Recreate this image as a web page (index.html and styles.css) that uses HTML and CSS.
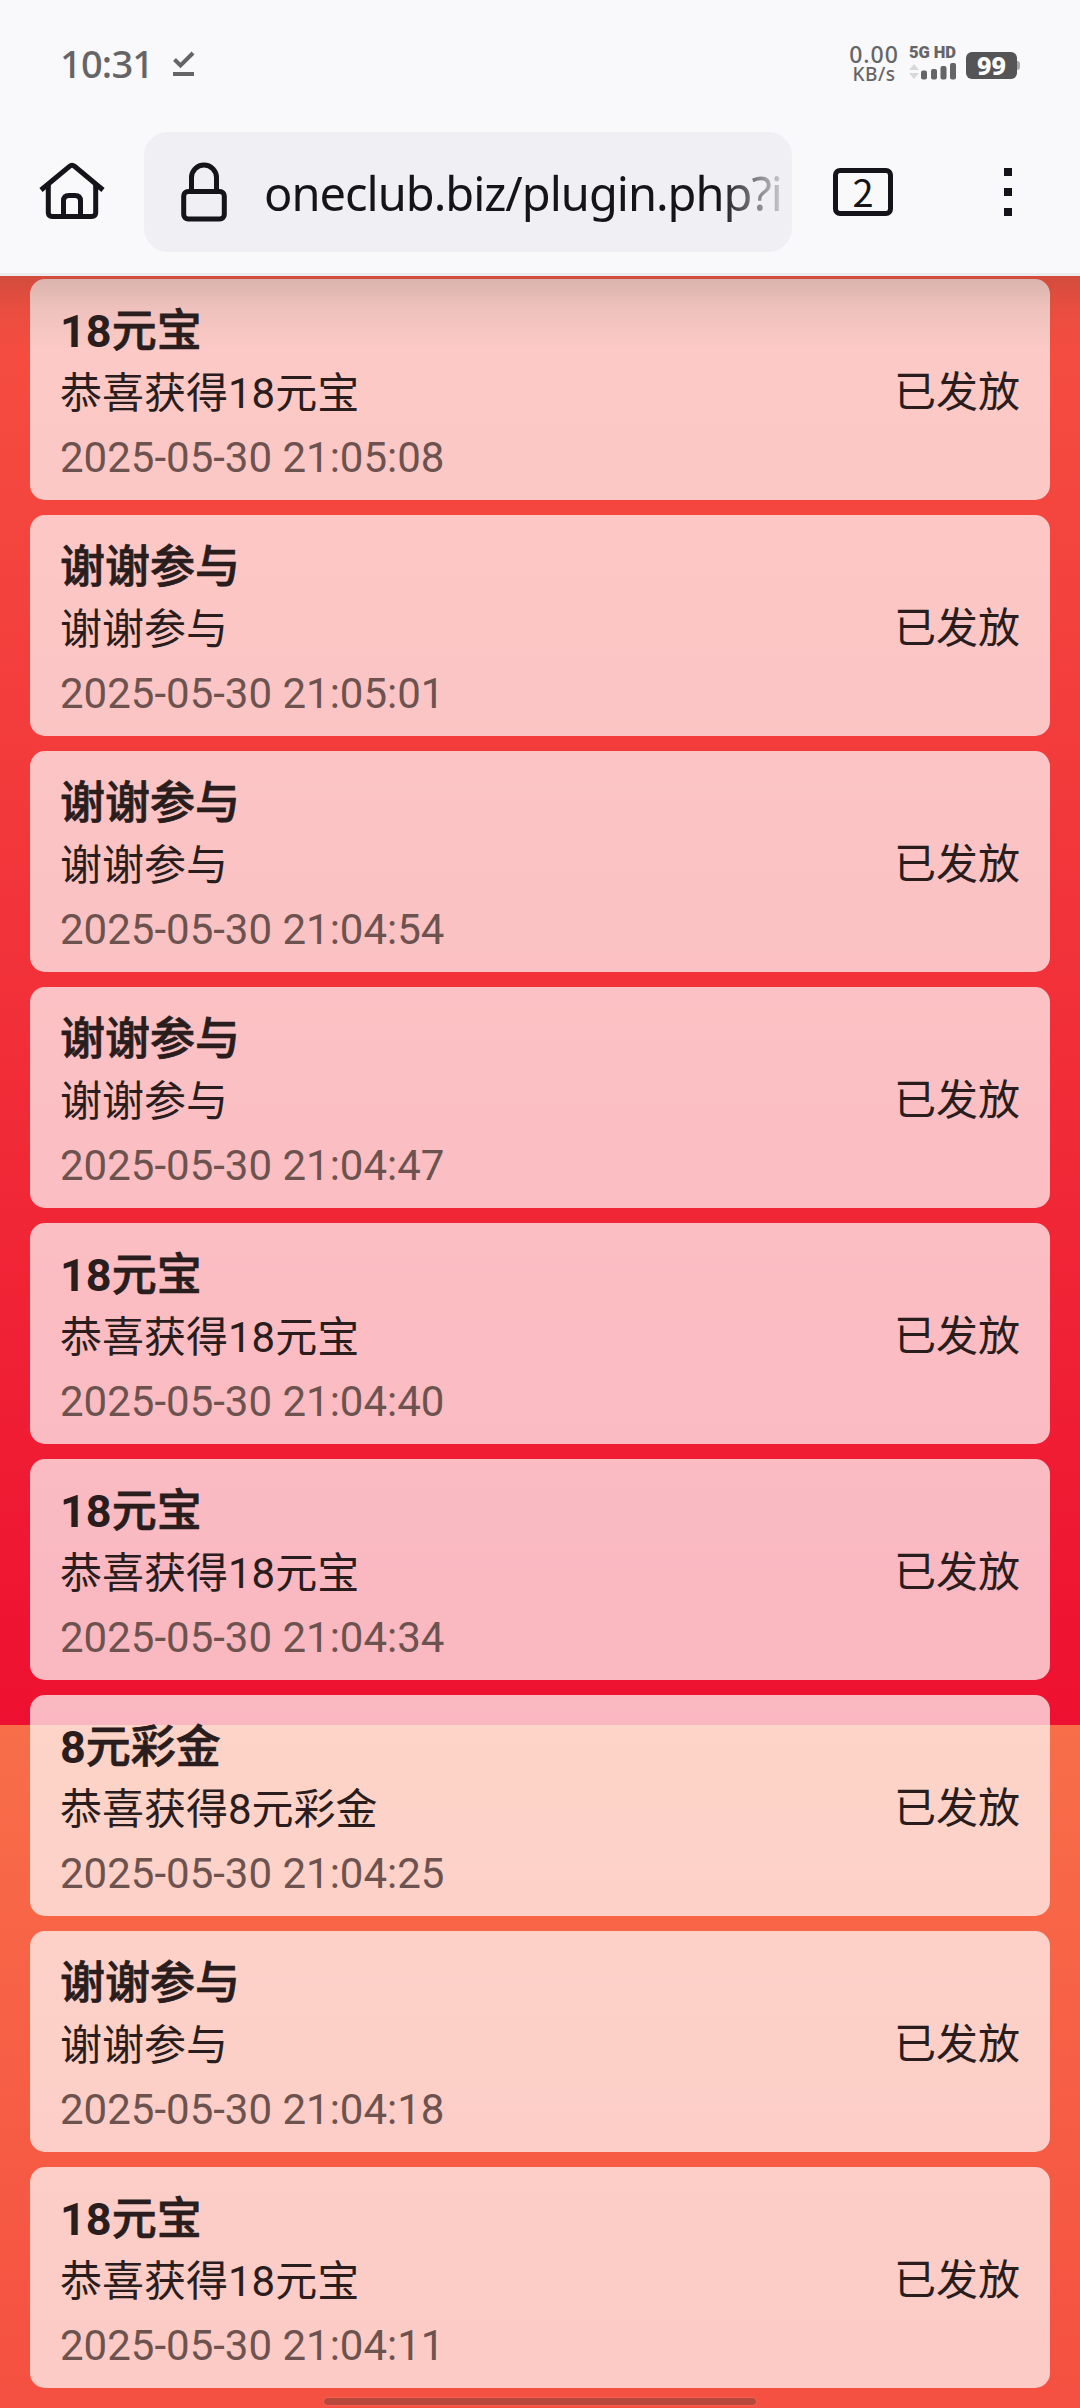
FILE: index.html
```html
<!DOCTYPE html>
<html lang="zh-CN">
<head>
<meta charset="utf-8">
<title>oneclub.biz</title>
<link rel="stylesheet" href="styles.css">
</head>
<body>
<header class="chrome">
  <div class="status">
    <span class="clock">10:31</span>
    <svg class="done" width="22" height="26" viewBox="0 0 22 26"><path d="M1.5 8.500 7.500 14.500 20 2" fill="none" stroke="#656567" stroke-width="4"/><path d="M0 23H21" stroke="#656567" stroke-width="4"/></svg>
    <div class="speed"><span class="rate">0.00</span><span class="unit">KB/s</span></div>
    <div class="signal">
      <span class="net"><span>5G</span><span>HD</span></span>
      <svg width="48" height="17" viewBox="0 0 48 17"><path d="M5 1 10 7H0ZM0 10H10L5 16Z" fill="#d8d8da"/><g fill="#656567"><rect x="12" y="7.500" width="6" height="9" rx="2"/><rect x="22" y="6" width="6" height="10.500" rx="2"/><rect x="31.500" y="3" width="6" height="13.500" rx="2"/><rect x="41" y="0" width="6" height="16.500" rx="2"/></g></svg>
    </div>
    <div class="battery"><span class="level">99</span><span class="tip"></span></div>
  </div>
  <div class="toolbar">
    <svg class="home" width="66" height="60" viewBox="0 0 66 60" fill="none" stroke="#15141a" stroke-width="5" stroke-linejoin="round"><path d="M2 28 30.500 4.300Q33 2.300 35.500 4.300L64 28"/><path d="M9.300 23V50.500Q9.300 54.500 13.300 54.500H52.700Q56.700 54.500 56.700 50.500V23"/><path d="M24.500 54V39Q24.500 33.500 30 33.500H36Q41.500 33.500 41.500 39V54"/></svg>
    <div class="address">
      <svg class="lock" width="46" height="60" viewBox="0 0 46 60" fill="none" stroke="#15141a" stroke-width="5"><rect x="2.700" y="29.500" width="40.600" height="27.500" rx="4.500"/><path d="M10.500 29V15.500A12.500 12.500 0 0 1 35.500 15.500V29"/></svg>
      <span class="url">oneclub.biz/plugin.php?i</span>
    </div>
    <span class="tabs">2</span>
    <span class="menu"><i></i><i></i><i></i></span>
  </div>
</header>
<main class="records">
  <article class="card"><div class="info"><h2><b>18</b>元宝</h2><p>恭喜获得18元宝</p><time>2025-05-30 21:05:08</time></div><span class="state">已发放</span></article>
  <article class="card"><div class="info"><h2>谢谢参与</h2><p>谢谢参与</p><time>2025-05-30 21:05:01</time></div><span class="state">已发放</span></article>
  <article class="card"><div class="info"><h2>谢谢参与</h2><p>谢谢参与</p><time>2025-05-30 21:04:54</time></div><span class="state">已发放</span></article>
  <article class="card"><div class="info"><h2>谢谢参与</h2><p>谢谢参与</p><time>2025-05-30 21:04:47</time></div><span class="state">已发放</span></article>
  <article class="card"><div class="info"><h2><b>18</b>元宝</h2><p>恭喜获得18元宝</p><time>2025-05-30 21:04:40</time></div><span class="state">已发放</span></article>
  <article class="card"><div class="info"><h2><b>18</b>元宝</h2><p>恭喜获得18元宝</p><time>2025-05-30 21:04:34</time></div><span class="state">已发放</span></article>
  <article class="card"><div class="info"><h2><b>8</b>元彩金</h2><p>恭喜获得8元彩金</p><time>2025-05-30 21:04:25</time></div><span class="state">已发放</span></article>
  <article class="card"><div class="info"><h2>谢谢参与</h2><p>谢谢参与</p><time>2025-05-30 21:04:18</time></div><span class="state">已发放</span></article>
  <article class="card"><div class="info"><h2><b>18</b>元宝</h2><p>恭喜获得18元宝</p><time>2025-05-30 21:04:11</time></div><span class="state">已发放</span></article>
</main>
<div class="gesture"></div>
</body>
</html>
```
FILE: styles.css
```css
* { box-sizing: border-box; }
body {
  margin: 0;
  width: 1080px;
  height: 2408px;
  overflow: hidden;
  position: relative;
  font-family: Roboto, "Noto Sans CJK SC", sans-serif;
  color: #291d1d;
}
.chrome {
  height: 276px;
  background: #f9f9fb;
  border-bottom: 3px solid #ececef;
}
.status {
  height: 132px;
  padding: 0 60px 0 60px;
  display: flex;
  align-items: flex-start;
  color: #656567;
  font-family: "Noto Sans", sans-serif;
}
.clock { margin-top: 37px; font-size: 38px; line-height: 52px; font-weight: 500; letter-spacing: -.8px; width: 92px; white-space: nowrap; }
.done { margin: 51px 0 0 21px; }
.speed {
  margin: 43px 0 0 auto;
  width: 52px;
  display: flex;
  flex-direction: column;
  align-items: center;
  font-weight: 500;
}
.rate { font-size: 23px; line-height: 22px; letter-spacing: 1px; margin-bottom: -1px; }
.unit { font-size: 19px; line-height: 21px; letter-spacing: .5px; }
.signal { margin: 44px 0 0 9px; width: 48px; }
.net { display: flex; justify-content: space-between; font: 900 16.500px/18px Roboto, sans-serif; margin-bottom: 1px; }
.net span:last-child { margin-right: 1px; }
.signal svg { display: block; }
.battery { display: flex; align-items: center; margin: 52px 0 0 9px; }
.level {
  width: 51px;
  height: 27px;
  border-radius: 6px;
  background: #555557;
  color: #fff;
  font: 800 25px/27px "Noto Sans", sans-serif;
  text-align: center;
}
.tip { width: 3px; height: 9px; background: #a9a9ab; border-radius: 0 3px 3px 0; }
.toolbar { height: 120px; display: flex; align-items: center; padding-left: 39px; }
.address {
  margin-left: 39px;
  width: 648px;
  height: 120px;
  padding-left: 37px;
  border-radius: 24px;
  background: #f0eff4;
  display: flex;
  align-items: center;
}
.url {
  margin: 1px 0 0 37px;
  width: 526px;
  overflow: hidden;
  white-space: nowrap;
  font: 400 47px/64px "Noto Sans", sans-serif;
  letter-spacing: -1px;
  background: linear-gradient(90deg, #15141a 456px, rgba(21, 20, 26, 0) 530px);
  background-clip: text;
  -webkit-background-clip: text;
  color: transparent;
}
.tabs {
  margin-left: 41px;
  width: 60px;
  height: 48px;
  border: 5px solid #15141a;
  border-radius: 7px;
  font: 400 38px/36px "Noto Sans CJK SC", sans-serif;
  text-align: center;
  color: #15141a;
}
.menu { margin-left: 111px; height: 48px; display: flex; flex-direction: column; justify-content: space-between; }
.menu i { width: 8px; height: 8px; background: #15141a; }
.records {
  position: relative;
  height: 2132px;
  padding: 3px 30px 0;
  display: flex;
  flex-direction: column;
  gap: 15px;
  background: linear-gradient(#f86e49, #ee1030) 0 -683px / 100% 2132px repeat-y;
}
.records::before {
  content: "";
  position: absolute;
  inset: 0 0 auto;
  height: 75px;
  background: linear-gradient(rgba(40, 60, 40, .17), rgba(40, 60, 40, .06) 45%, rgba(40, 60, 40, 0));
}
.card {
  flex: none;
  height: 221px;
  padding: 24px 30px 0;
  border-radius: 15px;
  background: rgba(255, 255, 255, .7);
  display: flex;
  justify-content: space-between;
}
.info { display: flex; flex-direction: column; }
h2 { margin: 0; font-size: 45px; line-height: 58px; font-weight: 500; -webkit-text-stroke: .7px currentColor; }
h2 b { font-weight: 700; -webkit-text-stroke: 0; }
p { margin: 0; font-size: 42px; line-height: 66px; }
time { font-size: 42px; line-height: 61px; color: #6d5350; }
.state { margin-top: 58px; font-size: 42px; line-height: 64px; }
.gesture {
  position: absolute;
  left: 324px;
  bottom: 3px;
  width: 432px;
  height: 7px;
  border-radius: 4px;
  background: #b8473c;
  box-shadow: 0 0 2px rgba(255, 255, 255, .3);
}
```
